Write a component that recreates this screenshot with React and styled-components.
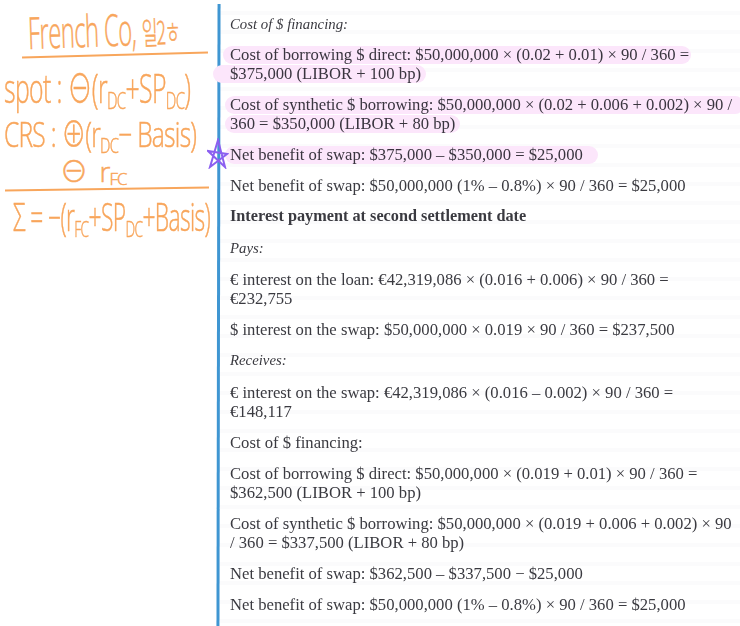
import React from "react";
import styled, { createGlobalStyle } from "styled-components";

const Global = createGlobalStyle`
  html, body {
    margin: 0;
    padding: 0;
    background: #fff;
  }
`;

const ink = "#f8a65c";

export default function App() {
  return (
    <Page>
      <Global />
      <Notes>
        <Title>
          French Co, <Korean>일2ㅎ</Korean>
        </Title>
        <NoteRule $tilt={-1.6} $left={22} $width={186} />
        <Note $top={9} $h={46} $left={4} $size={40} $scale={0.62}>
          spot : ⊖(r<Sub>DC</Sub>+SP<Sub>DC</Sub>)
        </Note>
        <Note $top={4} $h={38} $left={4} $size={35} $scale={0.7}>
          CRS : ⊕(r<Sub>DC</Sub>− Basis)
        </Note>
        <Note $top={5} $h={26} $left={60} $size={28} $scale={1}>
          ⊖ &nbsp;r<Sub $drop={3}>FC</Sub>
        </Note>
        <NoteRule $top={4} $tilt={-0.9} $left={5} $width={204} />
        <Note $top={4} $h={44} $left={13} $size={38} $scale={0.6}>
          Σ = −(r<Sub>FC</Sub>+SP<Sub>DC</Sub>+Basis)
        </Note>
      </Notes>
      <Divider />
      <Star viewBox="0 0 22 31" aria-hidden="true">
        <path d="M11 2 L3 29 L20 16 L1 13 L18 29 Z" />
      </Star>
      <Content>
        <Para $italic $gap={11}>Cost of $ financing:</Para>
        <Para>
          <Line $mark $from={7} $to={2}>
            Cost of borrowing $ direct: $50,000,000 × (0.02 + 0.01) × 90 / 360 =
          </Line>
          <Line $mark $from={17} $to={5}>
            $375,000 (LIBOR + 100 bp)
          </Line>
        </Para>
        <Para>
          <Line $mark $from={5} $to={12}>
            Cost of synthetic $ borrowing: $50,000,000 × (0.02 + 0.006 + 0.002) × 90 /
          </Line>
          <Line $mark $from={5} $to={5}>
            360 = $350,000 (LIBOR + 80 bp)
          </Line>
        </Para>
        <Para>
          <Line $mark $from={5} $to={15}>
            Net benefit of swap: $375,000 – $350,000 = $25,000
          </Line>
        </Para>
        <Para>Net benefit of swap: $50,000,000 (1% – 0.8%) × 90 / 360 = $25,000</Para>
        <Para $bold $gap={13}>Interest payment at second settlement date</Para>
        <Para $italic>Pays:</Para>
        <Para>
          <Line>€ interest on the loan: €42,319,086 × (0.016 + 0.006) × 90 / 360 =</Line>
          <Line>€232,755</Line>
        </Para>
        <Para>$ interest on the swap: $50,000,000 × 0.019 × 90 / 360 = $237,500</Para>
        <Para $italic $gap={13}>Receives:</Para>
        <Para>
          <Line>€ interest on the swap: €42,319,086 × (0.016 – 0.002) × 90 / 360 =</Line>
          <Line>€148,117</Line>
        </Para>
        <Para>Cost of $ financing:</Para>
        <Para>
          <Line>Cost of borrowing $ direct: $50,000,000 × (0.019 + 0.01) × 90 / 360 =</Line>
          <Line>$362,500 (LIBOR + 100 bp)</Line>
        </Para>
        <Para>
          <Line>Cost of synthetic $ borrowing: $50,000,000 × (0.019 + 0.006 + 0.002) × 90</Line>
          <Line>/ 360 = $337,500 (LIBOR + 80 bp)</Line>
        </Para>
        <Para>Net benefit of swap: $362,500 – $337,500 − $25,000</Para>
        <Para>Net benefit of swap: $50,000,000 (1% – 0.8%) × 90 / 360 = $25,000</Para>
      </Content>
    </Page>
  );
}

const Page = styled.div`
  position: relative;
  display: grid;
  grid-template-columns: 217px 3px 1fr;
  width: 740px;
  height: 626px;
  overflow: hidden;
  background: #fff;
`;

const Notes = styled.div`
  position: relative;
  z-index: 2;
  width: 225px;
  padding-top: 10px;
  color: ${ink};
  font-family: "Open Sans", "Noto Sans CJK KR", sans-serif;
  font-weight: 300;
  -webkit-text-stroke: 0.5px ${ink};
  white-space: nowrap;
`;

const Title = styled.div`
  width: fit-content;
  height: 44px;
  margin-left: 28px;
  font-size: 44px;
  line-height: 44px;
  letter-spacing: -1px;
  transform: rotate(-2deg) scaleX(0.54);
  transform-origin: left center;
`;

const Korean = styled.span`
  font-family: "Noto Sans CJK KR", sans-serif;
  font-size: 32px;
  font-weight: 300;
  letter-spacing: -2px;
`;

const NoteRule = styled.div`
  width: ${(p) => p.$width}px;
  height: 2px;
  margin-top: ${(p) => p.$top || 0}px;
  margin-left: ${(p) => p.$left}px;
  background: ${ink};
  transform: rotate(${(p) => p.$tilt}deg);
`;

const Note = styled.div`
  width: fit-content;
  height: ${(p) => p.$h}px;
  margin-top: ${(p) => p.$top || 0}px;
  margin-left: ${(p) => p.$left}px;
  font-size: ${(p) => p.$size}px;
  line-height: ${(p) => p.$h}px;
  letter-spacing: -1px;
  transform: scaleX(${(p) => p.$scale});
  transform-origin: left center;
`;

const Sub = styled.span`
  position: relative;
  top: ${(p) => p.$drop ?? 6}px;
  font-size: 0.6em;
`;

const Divider = styled.div`
  margin-top: 4px;
  background: #3f96d2;
  transform: rotate(0.1deg);
`;

const Star = styled.svg`
  position: absolute;
  left: 207px;
  top: 138px;
  z-index: 3;
  width: 22px;
  height: 31px;
  fill: none;
  stroke: #8b5ff0;
  stroke-width: 2;
`;

const Content = styled.div`
  padding: 15px 0 0 10px;
  color: #3a3a40;
  font-family: "Liberation Serif", "Times New Roman", serif;
  font-size: 16.65px;
  line-height: 19px;
  white-space: nowrap;
  background: repeating-linear-gradient(
    to bottom,
    #fff 0 11px,
    #fbfbfc 11px 15px,
    #fff 15px 19px
  );
`;

const Para = styled.div`
  margin-bottom: ${(p) => p.$gap || 12}px;
  font-size: ${(p) => (p.$italic ? "14.8px" : p.$bold ? "16.25px" : "inherit")};
  font-style: ${(p) => (p.$italic ? "italic" : "normal")};
  font-weight: ${(p) => (p.$bold ? 700 : 400)};
  filter: blur(0.3px);
`;

const Line = styled.div`
  position: relative;
  width: fit-content;

  &::before {
    content: ${(p) => (p.$mark ? '""' : "none")};
    position: absolute;
    top: 1px;
    bottom: 0;
    left: -${(p) => p.$from}px;
    right: -${(p) => p.$to}px;
    border-radius: 9px;
    background: #fce6fb;
    mix-blend-mode: multiply;
  }
`;
